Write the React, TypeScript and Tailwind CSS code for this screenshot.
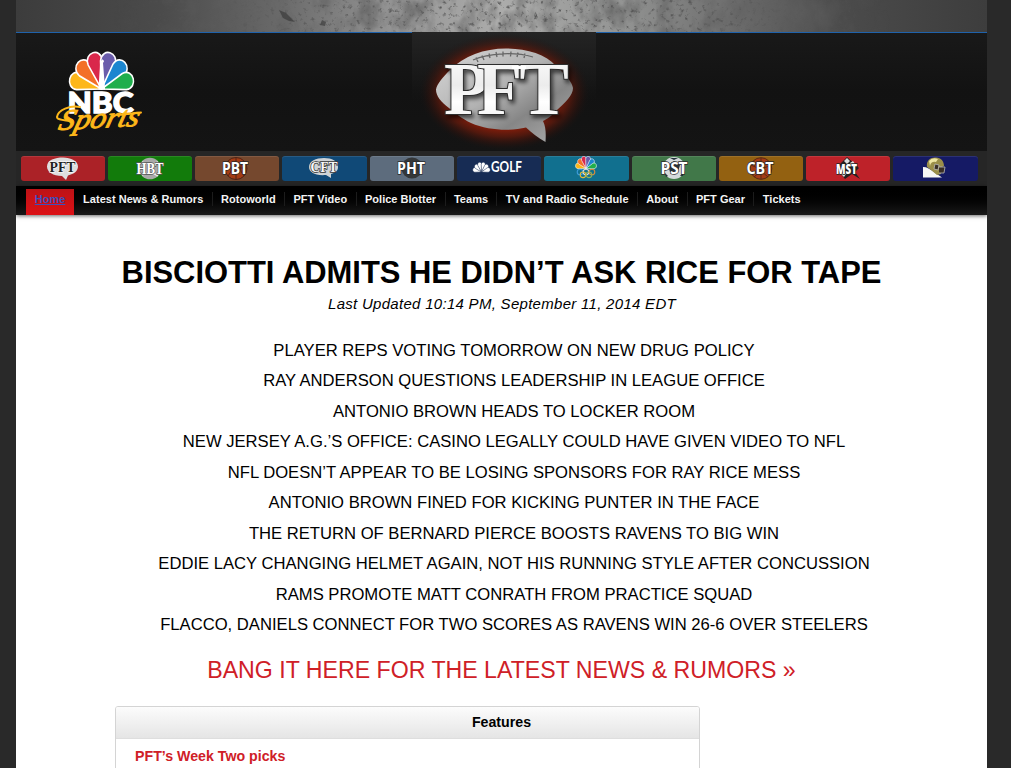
import type { ReactNode } from "react";

const headlines = [
  "PLAYER REPS VOTING TOMORROW ON NEW DRUG POLICY",
  "RAY ANDERSON QUESTIONS LEADERSHIP IN LEAGUE OFFICE",
  "ANTONIO BROWN HEADS TO LOCKER ROOM",
  "NEW JERSEY A.G.’S OFFICE: CASINO LEGALLY COULD HAVE GIVEN VIDEO TO NFL",
  "NFL DOESN’T APPEAR TO BE LOSING SPONSORS FOR RAY RICE MESS",
  "ANTONIO BROWN FINED FOR KICKING PUNTER IN THE FACE",
  "THE RETURN OF BERNARD PIERCE BOOSTS RAVENS TO BIG WIN",
  "EDDIE LACY CHANGING HELMET AGAIN, NOT HIS RUNNING STYLE AFTER CONCUSSION",
  "RAMS PROMOTE MATT CONRATH FROM PRACTICE SQUAD",
  "FLACCO, DANIELS CONNECT FOR TWO SCORES AS RAVENS WIN 26-6 OVER STEELERS",
];

const navItems = [
  "Latest News & Rumors",
  "Rotoworld",
  "PFT Video",
  "Police Blotter",
  "Teams",
  "TV and Radio Schedule",
  "About",
  "PFT Gear",
  "Tickets",
];

const feathers = [
  { color: "#fdb71a", angle: -74 },
  { color: "#f37028", angle: -45 },
  { color: "#d9274b", angle: -15 },
  { color: "#6a5cab", angle: 15 },
  { color: "#1b86d0", angle: 45 },
  { color: "#1fae4c", angle: 74 },
];

function Peacock({ outline = "#fff", mono }: { outline?: string; mono?: string }) {
  return (
    <g>
      {feathers.map((f) => (
        <path
          key={f.color}
          d="M0 0L-7.8 -25C-9.5 -38 9.5 -38 7.8 -25Z"
          transform={`rotate(${f.angle})`}
          fill={mono ?? f.color}
          stroke={outline}
          strokeWidth="1.6"
          strokeLinejoin="round"
        />
      ))}
    </g>
  );
}

function Concrete() {
  return (
    <svg className="block h-8 w-full shrink-0" viewBox="0 0 971 32" preserveAspectRatio="none">
      <defs>
        <linearGradient id="wall">
          <stop offset="0" stopColor="#3c3c3c" />
          <stop offset=".15" stopColor="#4b4b4b" />
          <stop offset=".27" stopColor="#696969" />
          <stop offset=".39" stopColor="#959595" />
          <stop offset=".5" stopColor="#acacab" />
          <stop offset=".62" stopColor="#949594" />
          <stop offset=".74" stopColor="#6c6c6c" />
          <stop offset=".85" stopColor="#4b4b4b" />
          <stop offset="1" stopColor="#3d3d3d" />
        </linearGradient>
        <linearGradient id="fade">
          <stop offset=".1" stopColor="#000" />
          <stop offset=".3" stopColor="#fff" />
          <stop offset=".75" stopColor="#fff" />
          <stop offset=".9" stopColor="#000" />
        </linearGradient>
        <mask id="wear">
          <rect width="971" height="32" fill="url(#fade)" />
        </mask>
        <filter id="patches" x="0" y="0" width="100%" height="100%">
          <feTurbulence type="fractalNoise" baseFrequency=".05 .035" numOctaves="4" seed="8" />
          <feColorMatrix values="0 0 0 0 .12  0 0 0 0 .12  0 0 0 0 .12  1.8 0 0 0 -.75" />
        </filter>
        <filter id="specks" x="0" y="0" width="100%" height="100%">
          <feTurbulence type="fractalNoise" baseFrequency=".22" numOctaves="3" seed="21" />
          <feColorMatrix values="0 0 0 0 .1  0 0 0 0 .1  0 0 0 0 .1  4 0 0 0 -2.35" />
        </filter>
      </defs>
      <rect width="971" height="32" fill="url(#wall)" />
      <g mask="url(#wear)">
        <rect width="971" height="32" filter="url(#patches)" />
        <rect width="971" height="32" filter="url(#specks)" />
      </g>
      <path d="M263 10l7 3 4 4 5 5-6-1-6-3zM306 20l4 2-1 4-5-1z" fill="#333" opacity=".6" />
    </svg>
  );
}

function NbcSports() {
  return (
    <svg className="block h-[118px] w-[180px]" viewBox="16 33 180 118">
      <g transform="translate(101.5 89) scale(.95 1.08)">
        <Peacock />
        <path d="M-3.2 .8L-1.4 -25L.8 -27.5L2.8 -26L1.6 -24L3.8 .8Z" fill="#fff" />
      </g>
      <rect x="64" y="91" width="76" height="6" fill="#121212" />
      <text x="67.5" y="112.6" textLength="66" lengthAdjust="spacingAndGlyphs" fill="#fff" stroke="#fff" strokeWidth="1.3" fontFamily="Lato, sans-serif" fontWeight="900" fontSize="28">
        NBC
      </text>
      <g transform="translate(57.5 130) rotate(-3) skewX(-18)" fontFamily="'Brush Script MT', 'Liberation Serif', serif" fontStyle="italic" fontSize="29">
        <text
          textLength="80"
          lengthAdjust="spacingAndGlyphs"
          fill="#fdb71a"
          stroke="#fdb71a"
          strokeWidth="1"
        >
          Sports
        </text>
      </g>
      <path d="M80 107C70 105 58 110 57 117C57 120 64 120 70 121M118 115L141 112.5" fill="none" stroke="#fdb71a" strokeWidth="2" strokeLinecap="round" />
    </svg>
  );
}

function PftLogo() {
  return (
    <svg className="block h-[119px] w-[184px]" viewBox="412 32 184 119">
      <defs>
        <radialGradient id="ember">
          <stop offset=".6" stopColor="#8e1e0a" />
          <stop offset=".76" stopColor="#641a0c" stopOpacity=".75" />
          <stop offset=".9" stopColor="#3b130c" stopOpacity=".3" />
          <stop offset="1" stopColor="#151515" stopOpacity="0" />
        </radialGradient>
        <linearGradient id="leather" x1="0" y1="0" x2="1" y2="1">
          <stop offset="0" stopColor="#d8d8d8" />
          <stop offset=".45" stopColor="#b2b2b2" />
          <stop offset=".68" stopColor="#868686" />
          <stop offset="1" stopColor="#b0b0b0" />
        </linearGradient>
        <linearGradient id="steel" x1="0" y1="0" x2="0" y2="1">
          <stop offset="0" stopColor="#fff" />
          <stop offset=".45" stopColor="#ececec" />
          <stop offset=".65" stopColor="#fff" />
          <stop offset="1" stopColor="#ececec" />
        </linearGradient>
        <linearGradient id="top" x1="0" y1="0" x2="0" y2="1">
          <stop offset="0" stopColor="#242424" />
          <stop offset="1" stopColor="#1c1c1c" stopOpacity="0" />
        </linearGradient>
        <filter id="drop">
          <feDropShadow dx="2" dy="3" stdDeviation="2" floodColor="#000" floodOpacity=".65" />
        </filter>
      </defs>
      <rect x="412" y="32" width="184" height="70" fill="url(#top)" />
      <ellipse cx="504.5" cy="92" rx="86" ry="59" fill="url(#ember)" />
      <path
        d="M436 89.5C437 84 443 77 450 70C464 56 484 48.5 506 48.5C526 48.5 546 54 556 66C566 75 572 82 573 88C573 95 565 103 557 110C552 116 547 119 543 121C546 127 546 134 545.5 142C538 138 532 133 526 127.5C512 131 489 131 471 123C461 118 455 113 449 108C441 102 436 96 436 89.5Z"
        fill="url(#leather)"
      />
      <path d="M473 60C489 52.5 516 52 533 57M476 57.5L478 62M482 55.5L484 60M489 53.5L490 58M496 52L497 57M503 51.5V56.5M511 51.5L510.5 56.5M518 52.5L517 57M525 53.5L524 58" fill="none" stroke="#666" strokeWidth="1.3" />
      <g fill="url(#steel)" filter="url(#drop)">
        <text
          x="444 477 519.5"
          y="114.3"
          fontFamily="'Liberation Serif', serif"
          fontWeight="700"
          fontSize="74"
          stroke="#2d2d2d"
          strokeWidth="2"
          paintOrder="stroke"
        >
          PFT
        </text>
        <path d="M512 65.7H526V69H512Z" fill="#fff" />
      </g>
    </svg>
  );
}

function Mark({ label, serif, x = 0, w = 28 }: { label: string; serif?: boolean; x?: number; w?: number }) {
  return (
    <text
      x={42 + x}
      y="18"
      textAnchor="middle"
      textLength={w}
      lengthAdjust="spacingAndGlyphs"
      fontFamily={serif ? "'Liberation Serif', serif" : "'Open Sans', sans-serif"}
      fontWeight="700"
      fontSize={serif ? 17 : 16}
      fill="#fff"
      stroke={serif ? "#555" : "#2a2a2a"}
      strokeWidth="1.4"
      paintOrder="stroke"
    >
      {label}
    </text>
  );
}

const tabs: { name: string; color: string; art: ReactNode }[] = [
  {
    name: "pft",
    color: "bg-[#ab2227]",
    art: (
      <>
        <path d="M26 10.5C26 4 34 1.5 42 1.5S57 5 57 10.5C57 15 53 18 47 19.5L45 24L41 20C32 20 26 16 26 10.5Z" fill="#dedede" />
        <text x="41.5" y="15.5" textAnchor="middle" textLength="26" lengthAdjust="spacingAndGlyphs" fontFamily="'Liberation Serif', serif" fontWeight="700" fontSize="15" fill="#222" stroke="#fff" strokeWidth="1.2" paintOrder="stroke">
          PFT
        </text>
      </>
    ),
  },
  {
    name: "hbt",
    color: "bg-[#127b0b]",
    art: (
      <>
        <circle cx="42" cy="12.5" r="10.8" fill="#a9a9a9" />
        <path d="M34 6Q42 11 50 6M34 19Q42 14 50 20" fill="none" stroke="#eee" strokeWidth="1.5" />
        <Mark label="HBT" serif w={27} />
      </>
    ),
  },
  {
    name: "pbt",
    color: "bg-[#75482e]",
    art: (
      <>
        <circle cx="41" cy="12.5" r="11" fill="#a33c14" stroke="#4d2418" />
        <path d="M30 12H52M41 2V23M33 5Q40 12 33 20M49 5Q42 12 49 20" fill="none" stroke="#4d2418" />
        <Mark label="PBT" w={26} x={-2} />
      </>
    ),
  },
  {
    name: "cft",
    color: "bg-[#104977]",
    art: (
      <>
        <path d="M27 11C27 5 34 2 42 2S56 5 56 11C56 15 53 17 49 18V22L44 19C33 20 27 16 27 11Z" fill="#cfd3d6" />
        <text x="42" y="15.5" textAnchor="middle" textLength="27" lengthAdjust="spacingAndGlyphs" fontFamily="'Liberation Serif', serif" fontWeight="700" fontSize="14" fill="#f8f8f8" stroke="#333" strokeWidth="1.5" paintOrder="stroke">
          CFT
        </text>
      </>
    ),
  },
  {
    name: "pht",
    color: "bg-[#5d6c7d]",
    art: (
      <>
        <circle cx="42" cy="12" r="10.5" fill="#343739" />
        <Mark label="PHT" w={28} x={-1} />
      </>
    ),
  },
  {
    name: "golf",
    color: "bg-[#172c54]",
    art: (
      <>
        <g transform="translate(24.5 16) scale(.26 .29)">
          <Peacock mono="#fff" outline="#172c54" />
        </g>
        <text x="34" y="16" textLength="31" lengthAdjust="spacingAndGlyphs" fontFamily="Lato, sans-serif" fontWeight="700" fontSize="14.5" fill="#fff">
          GOLF
        </text>
      </>
    ),
  },
  {
    name: "olympics",
    color: "bg-[#11708f]",
    art: (
      <>
        <g transform="translate(42 12.5) scale(.31 .36)">
          <Peacock />
        </g>
        <g fill="none" strokeWidth="1.1">
          <circle cx="36" cy="16" r="2.8" stroke="#3c9bd9" />
          <circle cx="42" cy="16" r="2.8" stroke="#ddd" />
          <circle cx="48" cy="16" r="2.8" stroke="#d98b3c" />
          <circle cx="39" cy="18.8" r="2.8" stroke="#e2b93a" />
          <circle cx="45" cy="18.8" r="2.8" stroke="#8fb058" />
        </g>
      </>
    ),
  },
  {
    name: "pst",
    color: "bg-[#417849]",
    art: (
      <>
        <circle cx="42" cy="12" r="11" fill="#d5d9dc" />
        <path d="M36 9L42 5L48 9L46 16H38ZM32 16L36 20L34 21ZM52 15L48 20L51 20ZM38 2H46L42 4Z" fill="#24313b" />
        <Mark label="PST" w={27} />
      </>
    ),
  },
  {
    name: "cbt",
    color: "bg-[#936111]",
    art: (
      <>
        <circle cx="42" cy="12.5" r="10.8" fill="#a43c16" stroke="#5b2a14" />
        <path d="M32 9Q42 15 52 9M42 2V23M35 21Q42 13 49 21" fill="none" stroke="#5b2a14" />
        <Mark label="CBT" w={27} x={-1} />
      </>
    ),
  },
  {
    name: "mst",
    color: "bg-[#be2229]",
    art: (
      <>
        <path d="M41 1L53 12L49 16L54 23L46 18L39 23L30 12Z" fill="#222" />
        <path d="M38 5l3-3 3 3-3 3zM44 7l3-2 2 3-3 2zM35 18l3 3 2-3-3-2z" fill="#ddd" />
        <text x="40.5" y="18" textAnchor="middle" textLength="21" lengthAdjust="spacingAndGlyphs" fontFamily="'Open Sans', sans-serif" fontWeight="800" fontSize="14" fill="#fff" stroke="#222" strokeWidth="1.4" paintOrder="stroke">
          MST
        </text>
      </>
    ),
  },
  {
    name: "notre-dame",
    color: "bg-[#151a65]",
    art: (
      <>
        <path d="M30 11C34 11 37 13 41 16L49 21.5H30Z" fill="#f6f6f6" />
        <path d="M34 11C33 4 38 1 43 1.5C48 2 51 5 51 10L47 12L48 18L44 19L38 14Z" fill="#9a8e49" />
        <path d="M36 5Q39 1 45 3L43 6Q38 5 37 10Z" fill="#eee6a3" />
        <path d="M42 8L46 9L45 14L41 13ZM46 11H52L51 17H46" fill="#392e24" stroke="#bbb" strokeWidth=".8" />
      </>
    ),
  },
];

function Tab({ color, children }: { color: string; children: ReactNode }) {
  return (
    <div className={`h-[25px] w-[84.3px] shrink-0 overflow-hidden rounded-[3px] shadow-[inset_0_1px_0_rgba(255,255,255,0.1)] ${color}`}>
      <svg className="block h-[25px] w-[84px]" viewBox="0 0 84 25">
        {children}
      </svg>
    </div>
  );
}

export default function App() {
  return (
    <div className="h-[768px] w-[1024px] overflow-hidden bg-white font-['Liberation_Sans',Arial,sans-serif] text-black">
      <div className="h-full w-[1011px] bg-[#292929] pr-6 pl-4">
        <div className="flex h-full flex-col overflow-hidden bg-white">
          <Concrete />
          <header className="flex h-[119px] shrink-0 bg-linear-to-b from-[#191919] via-[#121212] to-[#141414]">
            <div className="h-full w-[396px] border-t-[1.5px] border-[#1f62ab]">
              <NbcSports />
            </div>
            <PftLogo />
            <div className="h-full flex-1 border-t-[1.5px] border-[#1f62ab]" />
          </header>
          <div className="flex h-[35px] shrink-0 gap-[3px] bg-[#262626] pt-[4.5px] pl-[4.5px]">
            {tabs.map((t) => (
              <Tab key={t.name} color={t.color}>
                {t.art}
              </Tab>
            ))}
          </div>
          <nav className="flex h-[29px] shrink-0 bg-linear-to-b from-black to-[#191919] pl-[10px] text-[11px] font-bold text-[#f4f4f4] shadow-[0_1px_4px_rgba(0,0,0,0.6)]">
            <a className="mt-[3px] h-[25.5px] w-12 bg-linear-to-b from-[#bd1216] to-[#dc1015] text-center leading-[20px] text-[#3c50bd] underline">
              Home
            </a>
            <div className="flex h-[26px] items-center pl-[0.7px]">
              {navItems.map((item, i) => (
                <a
                  key={item}
                  className={`px-[8.4px] leading-[14px] tracking-[0.02px] whitespace-nowrap ${i > 0 ? "border-l border-[#1c1c1c]" : ""}`}
                >
                  {item}
                </a>
              ))}
            </div>
          </nav>
          <main className="flex flex-1 shrink-0 flex-col pt-[39px]">
            <h1 className="h-[37px] text-center text-[30.93px] leading-[38px] font-bold whitespace-nowrap">
              BISCIOTTI ADMITS HE DIDN’T ASK RICE FOR TAPE
            </h1>
            <p className="h-[26px] pl-px text-center text-[15px] leading-[26px] tracking-[0.29px] whitespace-nowrap italic">
              Last Updated 10:14 PM, September 11, 2014 EDT
            </p>
            <ul className="mt-[18.5px] pl-[25px] text-center text-[16.64px] leading-[30.5px] whitespace-nowrap">
              {headlines.map((h) => (
                <li key={h}>{h}</li>
              ))}
            </ul>
            <p className="mt-[11.5px] h-[36px] text-center text-[23.15px] leading-[36px] whitespace-nowrap text-[#cf2027]">
              BANG IT HERE FOR THE LATEST NEWS &amp; RUMORS »
            </p>
            <section className="mt-[18px] ml-[99px] h-[80px] w-[585px] rounded-t-[3px] border border-[#d4d4d4]">
              <h2 className="rounded-t-[2px] border-b border-[#dedede] bg-linear-to-b from-[#fcfcfc] to-[#e5e5e5] pl-[188px] text-center text-[14.2px] leading-[31px] font-bold">
                Features
              </h2>
              <a className="block pl-[19px] text-[14.2px] leading-[34px] font-bold text-[#cf2027]">PFT’s Week Two picks</a>
            </section>
          </main>
        </div>
      </div>
    </div>
  );
}
